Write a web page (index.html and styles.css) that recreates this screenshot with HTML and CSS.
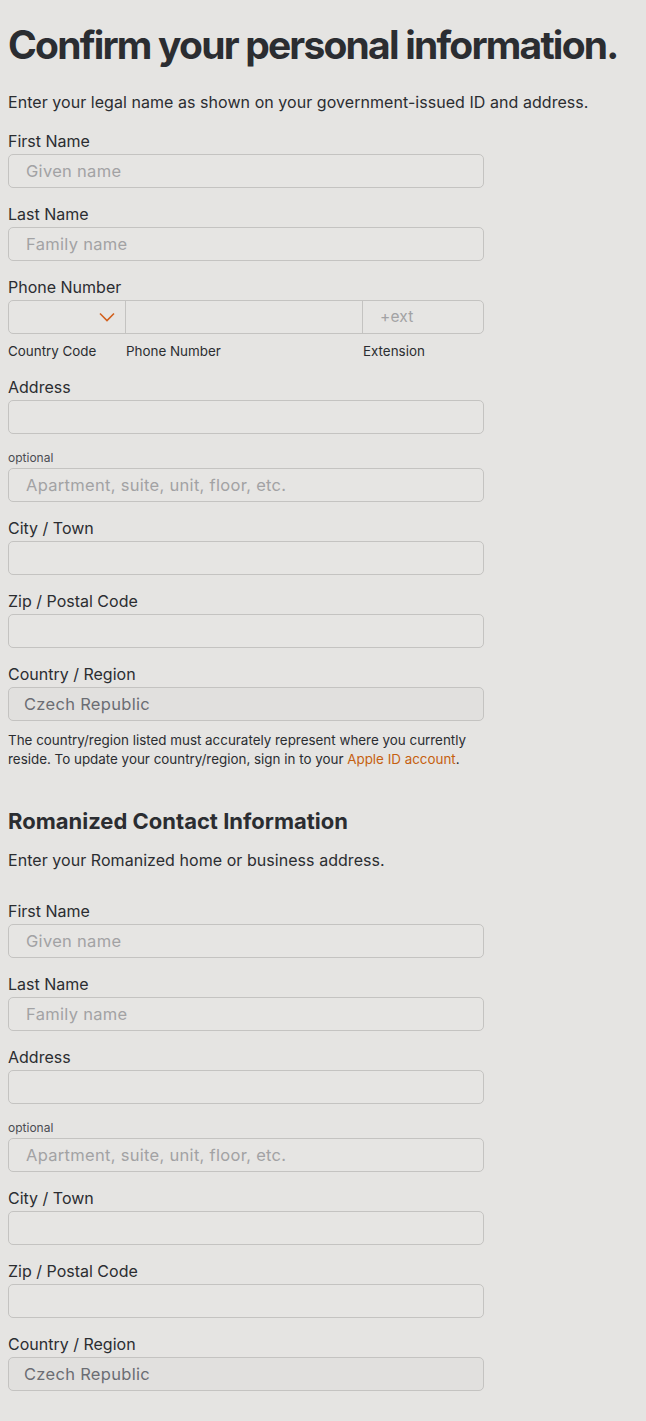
FILE: index.html
```html
<!DOCTYPE html>
<html lang="en">
<head>
<meta charset="utf-8">
<title>Confirm your personal information</title>
<link rel="stylesheet" href="styles.css">
</head>
<body>
<main class="page">
  <h1 class="title">Confirm your personal information.</h1>
  <p class="intro">Enter your legal name as shown on your government-issued ID and address.</p>

  <div class="field">
    <label class="label">First Name</label>
    <div class="input placeholder">Given name</div>
  </div>
  <div class="field">
    <label class="label">Last Name</label>
    <div class="input placeholder">Family name</div>
  </div>
  <div class="field phone-field">
    <label class="label">Phone Number</label>
    <div class="phone-row">
      <div class="seg seg-cc">
        <svg class="chev" width="16" height="10" viewBox="0 0 16 10"><path d="M1 1.5 L8 8.5 L15 1.5" fill="none" stroke="#d2601d" stroke-width="1.6"/></svg>
      </div>
      <div class="seg seg-num"></div>
      <div class="seg seg-ext placeholder">+ext</div>
    </div>
    <div class="phone-sub">
      <span class="sub sub-cc">Country Code</span>
      <span class="sub sub-num">Phone Number</span>
      <span class="sub sub-ext">Extension</span>
    </div>
  </div>
  <div class="field">
    <label class="label">Address</label>
    <div class="input"></div>
  </div>
  <div class="field">
    <label class="label small">optional</label>
    <div class="input placeholder">Apartment, suite, unit, floor, etc.</div>
  </div>
  <div class="field">
    <label class="label">City / Town</label>
    <div class="input"></div>
  </div>
  <div class="field">
    <label class="label">Zip / Postal Code</label>
    <div class="input"></div>
  </div>
  <div class="field last">
    <label class="label">Country / Region</label>
    <div class="input filled">Czech Republic</div>
    <p class="note">The country/region listed must accurately represent where you currently reside. To update your country/region, sign in to your <a class="link" href="#">Apple ID account</a>.</p>
  </div>

  <h2 class="section">Romanized Contact Information</h2>
  <p class="intro intro2">Enter your Romanized home or business address.</p>

  <div class="field">
    <label class="label">First Name</label>
    <div class="input placeholder">Given name</div>
  </div>
  <div class="field">
    <label class="label">Last Name</label>
    <div class="input placeholder">Family name</div>
  </div>
  <div class="field">
    <label class="label">Address</label>
    <div class="input"></div>
  </div>
  <div class="field">
    <label class="label small">optional</label>
    <div class="input placeholder">Apartment, suite, unit, floor, etc.</div>
  </div>
  <div class="field">
    <label class="label">City / Town</label>
    <div class="input"></div>
  </div>
  <div class="field">
    <label class="label">Zip / Postal Code</label>
    <div class="input"></div>
  </div>
  <div class="field">
    <label class="label">Country / Region</label>
    <div class="input filled">Czech Republic</div>
  </div>
</main>
</body>
</html>
```
FILE: styles.css
```css
html, body {
  margin: 0;
  padding: 0;
  background: #e5e4e2;
}
body {
  font-family: "Inter", "Noto Sans", "Liberation Sans", sans-serif;
  color: #2b2d31;
}
.page {
  padding: 21px 8px 30px 8px;
}
.title {
  margin: 0;
  font-size: 39px;
  line-height: 48px;
  font-weight: 700;
  letter-spacing: -1.8px;
  white-space: nowrap;
  color: #2b2d31;
}
.intro {
  margin: 21px 0 17px 0;
  font-size: 16px;
  line-height: 24px;
  letter-spacing: 0.05px;
}
.intro2 {
  margin: 13px 0 29px 0;
}
.field {
  width: 476px;
  display: flex;
  flex-direction: column;
  margin-bottom: 16px;
}
.label {
  font-size: 16px;
  line-height: 20px;
  margin-bottom: 3px;
}
.label.small {
  font-size: 12px;
  line-height: 16px;
  margin-bottom: 2px;
  color: #4a4c52;
}
.input {
  box-sizing: border-box;
  height: 34px;
  border: 1px solid #c4c3c1;
  border-radius: 5px;
  padding: 0 17px;
  font-size: 16.5px;
  letter-spacing: 0.3px;
  line-height: 32px;
  color: #2b2d31;
  background: #e6e5e3;
}
.placeholder {
  color: #a2a2a4;
}
.input.filled {
  background: #e1e0de;
  color: #6b6d73;
  padding-left: 15px;
}
.phone-row {
  display: flex;
  height: 34px;
  box-sizing: border-box;
  border: 1px solid #c4c3c1;
  border-radius: 5px;
  background: #e6e5e3;
}
.seg {
  box-sizing: border-box;
  height: 32px;
  font-size: 16px;
  line-height: 32px;
}
.seg-cc {
  width: 117px;
  border-right: 1px solid #c4c3c1;
  display: flex;
  align-items: center;
  justify-content: flex-end;
  padding-right: 10px;
}
.seg-num {
  width: 237px;
  border-right: 1px solid #c4c3c1;
}
.seg-ext {
  flex: 1;
  padding-left: 17px;
  font-size: 15.5px;
  letter-spacing: 0.2px;
}
.chev {
  display: block;
}
.phone-sub {
  display: flex;
  margin-top: 8px;
  font-size: 13.4px;
  line-height: 18px;
}
.sub-cc { width: 118px; }
.sub-num { width: 237px; }
.field.phone-field { margin-bottom: 17px; }
.field.last { margin-bottom: 38px; }
.note {
  margin: 10px 0 0 0;
  font-size: 13.4px;
  line-height: 19px;
  color: #2b2d31;
}
.link {
  color: #c5600f;
  text-decoration: none;
}
.section {
  margin: 0;
  font-size: 22px;
  line-height: 28px;
  font-weight: 700;
}
```
